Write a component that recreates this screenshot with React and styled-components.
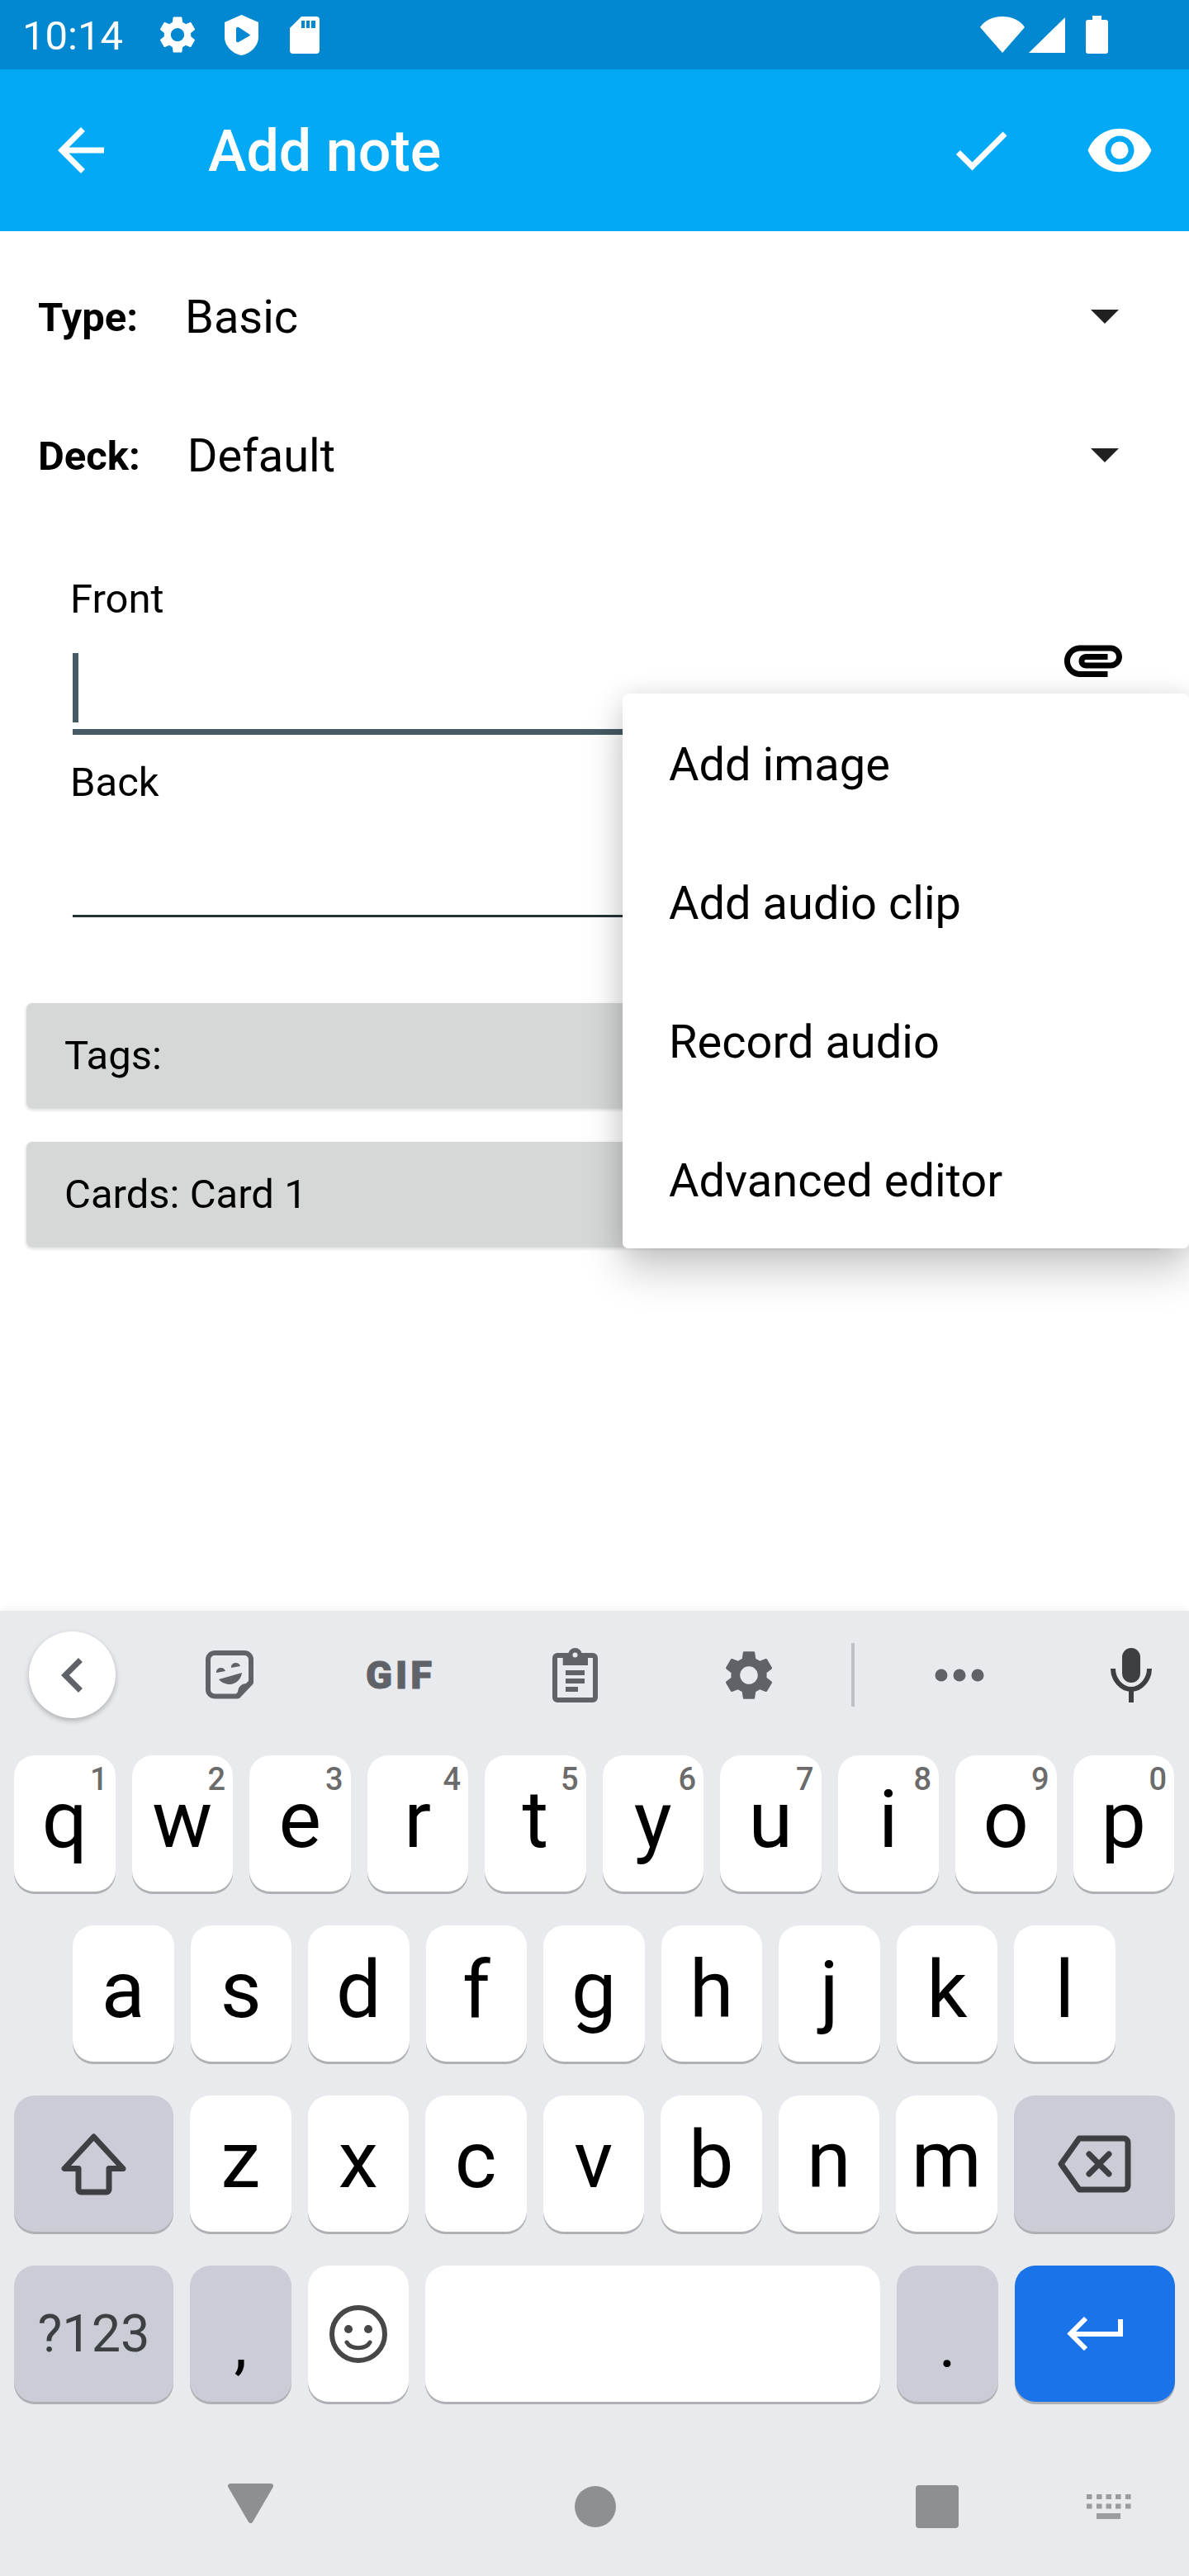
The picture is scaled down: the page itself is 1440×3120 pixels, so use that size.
import React from "react";
import styled, { createGlobalStyle } from "styled-components";

const GEAR =
  "M19.14 12.94c.04-.3.06-.61.06-.94 0-.32-.02-.64-.07-.94l2.03-1.58c.18-.14.23-.41.12-.61l-1.92-3.32c-.12-.22-.37-.29-.59-.22l-2.39.96c-.5-.38-1.03-.7-1.62-.94l-.36-2.54c-.04-.24-.24-.41-.48-.41h-3.84c-.24 0-.43.17-.47.41l-.36 2.54c-.59.24-1.13.57-1.62.94l-2.39-.96c-.22-.08-.47 0-.59.22L2.74 8.87c-.12.21-.08.47.12.61l2.03 1.58c-.05.3-.09.63-.09.94s.02.64.07.94l-2.03 1.58c-.18.14-.23.41-.12.61l1.92 3.32c.12.22.37.29.59.22l2.39-.96c.5.38 1.03.7 1.62.94l.36 2.54c.05.24.24.41.48.41h3.84c.24 0 .44-.17.47-.41l.36-2.54c.59-.24 1.13-.56 1.62-.94l2.39.96c.22.08.47 0 .59-.22l1.92-3.32c.12-.22.07-.47-.12-.61l-2.01-1.58zM12 15.6c-1.98 0-3.6-1.62-3.6-3.6s1.62-3.6 3.6-3.6 3.6 1.62 3.6 3.6-1.62 3.6-3.6 3.6z";

const GlobalStyle = createGlobalStyle`
  html, body {
    margin: 0;
    padding: 0;
    background: #fff;
  }
  body {
    font-family: Roboto, "Liberation Sans", sans-serif;
    color: #000;
  }
  * {
    box-sizing: border-box;
  }
`;

const Screen = styled.div`
  width: 1440px;
  height: 3120px;
  display: flex;
  flex-direction: column;
  overflow: hidden;
`;

const StatusBar = styled.div`
  height: 84px;
  flex: none;
  display: flex;
  align-items: center;
  padding-left: 27px;
  padding-right: 98px;
  background: #0288d1;
  color: #fff;
`;

const Time = styled.span`
  font-size: 49px;
  width: 124px;
  margin-right: 37px;
  position: relative;
  top: 1px;
`;

const StatusIcon = styled.svg`
  display: block;
  fill: #fff;
  flex: none;
  margin-left: ${(p) => p.$ml || 0}px;
`;

const StatusSpacer = styled.div`
  flex: 1;
`;

const AppBar = styled.div`
  height: 196px;
  flex: none;
  display: flex;
  align-items: center;
  padding-left: 56px;
  padding-right: 42px;
  background: #03a9f4;
  color: #fff;
`;

const BarIcon = styled.svg`
  width: 84px;
  height: 84px;
  fill: #fff;
  flex: none;
`;

const Title = styled.div`
  font-size: 70px;
  font-weight: 500;
  margin-left: 112px;
  padding-top: 2px;
  flex: 1;
`;

const ActionGap = styled.div`
  width: 84px;
`;

const Main = styled.div`
  position: relative;
  flex: 1;
  padding-top: 20px;
  background: #fff;
`;

const PickerRow = styled.div`
  height: 168px;
  display: flex;
  align-items: center;
  padding-left: 46px;
  padding-right: 85px;
`;

const PickerLabel = styled.span`
  font-size: 49px;
  font-weight: 700;
`;

const PickerValue = styled.span`
  font-size: 56px;
  margin-left: 57px;
  flex: 1;
`;

const Caret = styled.div`
  width: 0;
  height: 0;
  border-left: 17px solid transparent;
  border-right: 17px solid transparent;
  border-top: 17px solid #212121;
  margin-bottom: 1px;
`;

const Fields = styled.div`
  margin-top: 61px;
  padding: 0 88px;
`;

const Field = styled.div`
  position: relative;
  margin-bottom: 29px;
`;

const FieldLabel = styled.div`
  font-size: 49px;
  line-height: 58px;
  margin-left: -3px;
`;

const FieldInput = styled.div`
  height: ${(p) => (p.$active ? 135 : 134)}px;
  padding-top: 36px;
  border-bottom: ${(p) => (p.$active ? "7px solid #455a64" : "3.5px solid #263238")};
`;

const Cursor = styled.div`
  width: 7px;
  height: 84px;
  background: #455a64;
`;

const AttachIcon = styled.svg`
  position: absolute;
  right: -14px;
  top: 60px;
  width: 84px;
  height: 84px;
  fill: #000;
`;

const Cards = styled.div`
  margin-top: 104px;
  padding: 0 32px;
  display: flex;
  flex-direction: column;
  gap: 41px;
`;

const GreyCard = styled.div`
  height: 127px;
  display: flex;
  align-items: center;
  padding-left: 46px;
  font-size: 49px;
  background: #d6d7d7;
  border-radius: 7px;
  box-shadow: 0 2px 4px rgba(0, 0, 0, 0.18);
`;

const Menu = styled.div`
  position: absolute;
  top: 560px;
  right: 0;
  width: 686px;
  background: #fff;
  border-radius: 7px;
  box-shadow: 0 28px 50px rgba(0, 0, 0, 0.2), 0 0 30px rgba(0, 0, 0, 0.1);
`;

const MenuItem = styled.div`
  height: 168px;
  display: flex;
  align-items: center;
  padding-left: 56px;
  padding-top: 3px;
  font-size: 56px;
`;

const Keyboard = styled.div`
  height: 1169px;
  flex: none;
  background: #e8eaed;
  box-shadow: 0 -4px 8px rgba(0, 0, 0, 0.04);
  position: relative;
`;

const Toolbar = styled.div`
  height: 175px;
  padding-bottom: 20px;
  padding-right: 45px;
  display: flex;
  align-items: center;
`;

const ToolSlot = styled.div`
  width: ${(p) => p.$w}px;
  flex: none;
  display: flex;
  justify-content: center;
  align-items: center;
`;

const BackCircle = styled.div`
  width: 105px;
  height: 105px;
  border-radius: 50%;
  background: #fff;
  display: flex;
  align-items: center;
  justify-content: center;
  box-shadow: 0 3px 6px rgba(0, 0, 0, 0.25);
`;

const ToolIcon = styled.svg`
  display: block;
  fill: ${(p) => p.$fill || "#5f6368"};
`;

const GifText = styled.span`
  font-size: 47px;
  font-weight: 900;
  letter-spacing: 4px;
  color: #5f6368;
  line-height: 47px;
  -webkit-text-stroke: 1px #5f6368;
`;

const Divider = styled.div`
  width: 4px;
  height: 77px;
  background: #bdc1c6;
`;

const MicSlot = styled.div`
  margin-left: auto;
`;

const KeyRows = styled.div`
  display: flex;
  flex-direction: column;
  gap: 41px;
`;

const KeyRow = styled.div`
  display: flex;
  gap: 20px;
  padding-left: ${(p) => p.$indent || 17}px;
  padding-right: 17px;
`;

const KEY_BG = { letter: "#fff", fn: "#cacdd5", action: "#1a73e8" };

const Key = styled.div`
  position: relative;
  width: ${(p) => (p.$w ? `${p.$w}px` : "122.5px")};
  flex: ${(p) => (p.$grow ? 1 : "none")};
  height: 165px;
  border-radius: 25px;
  background: ${(p) => KEY_BG[p.$kind || "letter"]};
  box-shadow: 0 3px 0 #aeb0b3;
  display: flex;
  align-items: center;
  justify-content: center;
`;

const Letter = styled.span`
  font-size: 97px;
  line-height: 1;
  position: relative;
  top: -4px;
`;

const Punct = styled.span`
  font-size: 80px;
  line-height: 1;
  position: relative;
  top: 13px;
`;

const Hint = styled.span`
  position: absolute;
  top: 10px;
  right: 9px;
  font-size: 38px;
  line-height: 38px;
  font-weight: 500;
  color: #6b6b6b;
`;

const SymbolsLabel = styled.span`
  font-size: 63px;
  color: #3c4043;
`;

const NavBar = styled.div`
  height: 211px;
  padding-top: 42px;
  padding-left: 275px;
  padding-right: 70px;
  display: flex;
  align-items: center;
`;

const NavTriangle = styled.svg`
  width: 57px;
  height: 50px;
  fill: #8e8f91;
  stroke: #8e8f91;
  margin-bottom: 8px;
`;

const NavCircle = styled.div`
  width: 50px;
  height: 50px;
  margin-left: 364px;
  border-radius: 50%;
  background: #8e8f91;
`;

const NavSquare = styled.div`
  width: 52px;
  height: 52px;
  margin-left: 363px;
  border-radius: 4px;
  background: #8e8f91;
`;

const NavKeyboard = styled.svg`
  width: 54px;
  height: 30px;
  fill: #9a9c9f;
  margin-left: auto;
`;

function LetterKey({ ch, hint }) {
  return (
    <Key>
      <Letter>{ch}</Letter>
      {hint && <Hint>{hint}</Hint>}
    </Key>
  );
}

const TOP_ROW = [
  ["q", "1"],
  ["w", "2"],
  ["e", "3"],
  ["r", "4"],
  ["t", "5"],
  ["y", "6"],
  ["u", "7"],
  ["i", "8"],
  ["o", "9"],
  ["p", "0"],
];

const MENU_ITEMS = ["Add image", "Add audio clip", "Record audio", "Advanced editor"];

const GridDots = () => {
  const xs = [0, 12, 23.5, 35, 47];
  return (
    <NavKeyboard viewBox="0 0 54 30">
      {xs.map((x) => (
        <rect key={`a${x}`} x={x} y="0" width="6.5" height="6" />
      ))}
      {xs.map((x) => (
        <rect key={`b${x}`} x={x} y="11.5" width="6.5" height="6" />
      ))}
      <rect x="12" y="23" width="29" height="7" />
    </NavKeyboard>
  );
};

export default function App() {
  return (
    <Screen>
      <GlobalStyle />
      <StatusBar>
        <Time>10:14</Time>
        <StatusIcon width="54" height="54" viewBox="0 0 24 24">
          <path d={GEAR} />
        </StatusIcon>
        <StatusIcon $ml={30} width="41" height="49" viewBox="0 0 41 49">
          <path
            fillRule="evenodd"
            d="M20.5 0 L41 9 V27 C41 37 32 47 20.5 49 C9 47 0 37 0 27 V9z M14 17 V31 C14 33 15.5 33.5 17 33 L30 25.5 C31 25 31 24 30 23.5 L17 15 C15.5 14.5 14 15 14 17z"
          />
        </StatusIcon>
        <StatusIcon $ml={38} width="36" height="45" viewBox="0 0 36 45">
          <path
            fillRule="evenodd"
            d="M14 0 H32 a4 4 0 0 1 4 4 V41 a4 4 0 0 1 -4 4 H4 a4 4 0 0 1 -4 -4 V14z M14 5 V14 H18 V5z M20 5 V14 H24 V5z M26 5 V14 H31 V5z"
          />
        </StatusIcon>
        <StatusSpacer />
        <StatusIcon width="54" height="44" viewBox="0 0 54 44">
          <path d="M0 13 C6 4 16 0 27 0 C38 0 48 4 54 13 L27 44z" />
        </StatusIcon>
        <StatusIcon $ml={5} width="44" height="43" viewBox="0 0 44 43">
          <path d="M44 0 V43 H0z" />
        </StatusIcon>
        <StatusIcon $ml={25} width="27" height="46" viewBox="0 0 27 46">
          <path d="M8 0 H19 V5 H24 a3 3 0 0 1 3 3 V43 a3 3 0 0 1 -3 3 H3 a3 3 0 0 1 -3 -3 V8 a3 3 0 0 1 3 -3 H8z" />
        </StatusIcon>
      </StatusBar>

      <AppBar>
        <BarIcon viewBox="0 0 24 24">
          <path d="M20 11H7.83l5.59-5.59L12 4l-8 8 8 8 1.41-1.41L7.83 13H20v-2z" />
        </BarIcon>
        <Title>Add note</Title>
        <BarIcon viewBox="0 0 24 24">
          <path d="M9 16.17L4.83 12l-1.42 1.41L9 19 21 7l-1.41-1.41z" />
        </BarIcon>
        <ActionGap />
        <BarIcon viewBox="0 0 24 24">
          <path d="M12 4.5C7 4.5 2.73 7.61 1 12c1.73 4.39 6 7.5 11 7.5s9.27-3.11 11-7.5c-1.73-4.39-6-7.5-11-7.5zM12 17c-2.76 0-5-2.24-5-5s2.24-5 5-5 5 2.24 5 5-2.24 5-5 5zm0-8c-1.66 0-3 1.34-3 3s1.34 3 3 3 3-1.34 3-3-1.34-3-3-3z" />
        </BarIcon>
      </AppBar>

      <Main>
        <PickerRow>
          <PickerLabel>Type:</PickerLabel>
          <PickerValue>Basic</PickerValue>
          <Caret />
        </PickerRow>
        <PickerRow>
          <PickerLabel>Deck:</PickerLabel>
          <PickerValue>Default</PickerValue>
          <Caret />
        </PickerRow>

        <Fields>
          <Field>
            <FieldLabel>Front</FieldLabel>
            <FieldInput $active>
              <Cursor />
            </FieldInput>
            <AttachIcon viewBox="0 0 24 24">
              <path d="M2 12.5C2 9.46 4.46 7 7.5 7H18c2.21 0 4 1.79 4 4s-1.79 4-4 4H9.5C8.12 15 7 13.88 7 12.5S8.12 10 9.5 10H17v2H9.41c-.55 0-.55 1 0 1H18c1.1 0 2-.9 2-2s-.9-2-2-2H7.5C5.57 9 4 10.57 4 12.5S5.57 16 7.5 16H17v2H7.5C4.46 18 2 15.54 2 12.5z" />
            </AttachIcon>
          </Field>
          <Field>
            <FieldLabel>Back</FieldLabel>
            <FieldInput />
          </Field>
        </Fields>

        <Cards>
          <GreyCard>Tags:</GreyCard>
          <GreyCard>Cards: Card 1</GreyCard>
        </Cards>

        <Menu>
          {MENU_ITEMS.map((item) => (
            <MenuItem key={item}>{item}</MenuItem>
          ))}
        </Menu>
      </Main>

      <Keyboard>
        <Toolbar>
          <ToolSlot $w={175}>
            <BackCircle>
              <ToolIcon width="84" height="84" viewBox="0 0 24 24">
                <path d="M15.41 7.41L14 6l-6 6 6 6 1.41-1.41L10.83 12z" />
              </ToolIcon>
            </BackCircle>
          </ToolSlot>
          <ToolSlot $w={207}>
            <ToolIcon width="60" height="60" viewBox="19 18 60 60">
              <path
                fill="none"
                stroke="#5f6368"
                strokeWidth="6"
                d="M30 21 H66 a8 8 0 0 1 8 8 V56 L57 73.5 H30 a8 8 0 0 1 -8 -8 V29 a8 8 0 0 1 8 -8z"
              />
              <path d="M77 58 H68 a10 10 0 0 0 -10 10 V76 H60z" />
              <path d="M32 45 a5.5 5 0 0 1 11 -2z" />
              <path d="M50 39 a5.5 5 0 0 1 11 -2z" />
              <path d="M35 53 L63 45 C62 54 54 60 46 59 C41 58 37 56 35 53z" />
            </ToolIcon>
          </ToolSlot>
          <ToolSlot $w={206}>
            <GifText>GIF</GifText>
          </ToolSlot>
          <ToolSlot $w={217}>
            <ToolIcon width="55" height="66" viewBox="29 14 55 66">
              <rect x="32" y="23" width="49" height="54" rx="3" fill="none" stroke="#5f6368" strokeWidth="6" />
              <rect x="41.7" y="20" width="30.3" height="15" />
              <circle cx="56.5" cy="22.5" r="8.5" />
              <circle cx="56.5" cy="22.5" r="3" fill="#e8eaed" />
              <rect x="45" y="41" width="23" height="6" />
              <rect x="45" y="51" width="23" height="6" />
              <rect x="45" y="61" width="15" height="6" />
            </ToolIcon>
          </ToolSlot>
          <ToolSlot $w={204}>
            <ToolIcon width="72" height="72" viewBox="0 0 24 24">
              <path d={GEAR} />
            </ToolIcon>
          </ToolSlot>
          <ToolSlot $w={48}>
            <Divider />
          </ToolSlot>
          <ToolSlot $w={210}>
            <ToolIcon width="60" height="16" viewBox="0 0 60 16">
              <circle cx="8" cy="8" r="7.5" />
              <circle cx="30" cy="8" r="7.5" />
              <circle cx="52" cy="8" r="7.5" />
            </ToolIcon>
          </ToolSlot>
          <MicSlot>
            <ToolIcon width="50" height="66" viewBox="0 0 50 66" $fill="#3c4043">
              <rect x="14" y="0" width="22" height="42" rx="11" />
              <path d="M3 25 C3 38 13 50 25 50 C37 50 47 38 47 25" fill="none" stroke="#3c4043" strokeWidth="6" />
              <rect x="22" y="48" width="6" height="18" />
            </ToolIcon>
          </MicSlot>
        </Toolbar>

        <KeyRows>
          <KeyRow>
            {TOP_ROW.map(([ch, hint]) => (
              <LetterKey key={ch} ch={ch} hint={hint} />
            ))}
          </KeyRow>
          <KeyRow $indent={88}>
            {"asdfghjkl".split("").map((ch) => (
              <LetterKey key={ch} ch={ch} />
            ))}
          </KeyRow>
          <KeyRow>
            <Key $kind="fn" $w={193}>
              <ToolIcon width="79" height="76" viewBox="0 0 79 76" $fill="none">
                <path
                  d="M39.5 5 L4 43.5 H21 V69 a3 3 0 0 0 3 3 H55 a3 3 0 0 0 3 -3 V43.5 H75z"
                  stroke="#3c4043"
                  strokeWidth="7"
                  strokeLinejoin="round"
                />
              </ToolIcon>
            </Key>
            {"zxcvbnm".split("").map((ch) => (
              <LetterKey key={ch} ch={ch} />
            ))}
            <Key $kind="fn" $grow>
              <ToolIcon width="89" height="70" viewBox="0 0 89 70" $fill="none">
                <path
                  d="M26 4 H80 a5 5 0 0 1 5 5 V61 a5 5 0 0 1 -5 5 H26 L4 35z"
                  stroke="#3c4043"
                  strokeWidth="7"
                  strokeLinejoin="round"
                />
                <path d="M38 23 L62 47 M62 23 L38 47" stroke="#3c4043" strokeWidth="7" strokeLinecap="round" />
              </ToolIcon>
            </Key>
          </KeyRow>
          <KeyRow>
            <Key $kind="fn" $w={193}>
              <SymbolsLabel>?123</SymbolsLabel>
            </Key>
            <Key $kind="fn">
              <Punct>,</Punct>
            </Key>
            <Key>
              <ToolIcon width="70" height="70" viewBox="0 0 70 70" $fill="none">
                <circle cx="35" cy="35" r="32" stroke="#474747" strokeWidth="6" />
                <circle cx="23" cy="29" r="5" fill="#474747" />
                <circle cx="47" cy="29" r="5" fill="#474747" />
                <path d="M21 45 C26 54 44 54 49 45" stroke="#474747" strokeWidth="5" strokeLinecap="round" />
              </ToolIcon>
            </Key>
            <Key $w={551} />
            <Key $kind="fn">
              <Punct>.</Punct>
            </Key>
            <Key $kind="action" $grow>
              <ToolIcon width="68" height="41" viewBox="0 0 68 41" $fill="none">
                <path d="M65 3 V21 H5" stroke="#fff" strokeWidth="6" />
                <path d="M23 2 L4.5 20.5 L23 39" stroke="#fff" strokeWidth="6" />
              </ToolIcon>
            </Key>
          </KeyRow>
        </KeyRows>

        <NavBar>
          <NavTriangle viewBox="0 0 57 50">
            <path d="M4 4 H53 L28.5 46z" strokeWidth="6" strokeLinejoin="round" />
          </NavTriangle>
          <NavCircle />
          <NavSquare />
          <GridDots />
        </NavBar>
      </Keyboard>
    </Screen>
  );
}
